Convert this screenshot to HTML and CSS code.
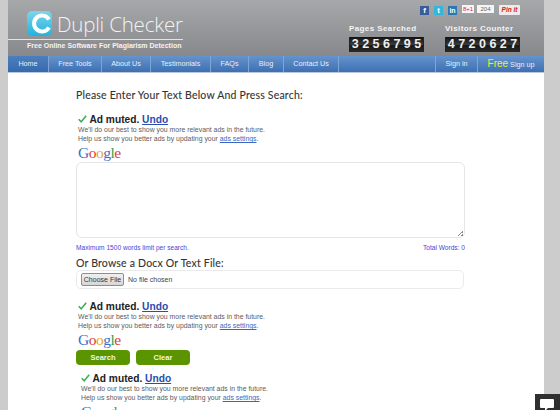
FILE: index.html
```html
<!DOCTYPE html>
<html lang="en">
<head>
  <meta charset="UTF-8">
  <title>Dupli Checker</title>
  <link rel="stylesheet" href="styles.css">
</head>
<body>
  <div id="page">
    <div class="header">
      <div class="brand">
        <div class="logo">
          <svg class="logo-icon" width="25" height="25" viewBox="0 0 25 25">
            <defs>
              <linearGradient id="logoFill" x1="0" y1="0" x2="0" y2="1">
                <stop offset="0" stop-color="#7fd4ea"/>
                <stop offset="1" stop-color="#1fb4dc"/>
              </linearGradient>
            </defs>
            <rect width="25" height="25" rx="5" fill="url(#logoFill)"/>
            <path d="M22 8.5a8 8 0 1 0 0 8" fill="none" stroke="#fff" stroke-width="4"/>
          </svg>
          <span class="logo-text">Dupli Checker</span>
        </div>
        <div class="tagline">Free Online Software For Plagiarism Detection</div>
      </div>
      <div class="header-right">
        <div class="social">
          <span class="soc soc-fb">f</span>
          <span class="soc soc-tw">t</span>
          <span class="soc soc-in">in</span>
          <span class="gplus">8+1</span>
          <span class="gcount">204</span>
          <span class="pin">Pin it</span>
        </div>
        <div class="counters">
          <div class="counter">
            <div class="counter-title">Pages Searched</div>
            <div class="digits"><span>3</span><span>2</span><span>5</span><span>6</span><span>7</span><span>9</span><span>5</span></div>
          </div>
          <div class="counter">
            <div class="counter-title">Visitors Counter</div>
            <div class="digits"><span>4</span><span>7</span><span>2</span><span>0</span><span>6</span><span>2</span><span>7</span></div>
          </div>
        </div>
      </div>
    </div>

    <div class="nav">
      <a class="nav-item active nav-home">Home</a>
      <a class="nav-item nav-tools">Free Tools</a>
      <a class="nav-item nav-about">About Us</a>
      <a class="nav-item nav-test">Testimonials</a>
      <a class="nav-item nav-faq">FAQs</a>
      <a class="nav-item nav-blog">Blog</a>
      <a class="nav-item nav-contact">Contact Us</a>
      <a class="nav-item nav-signin">Sign in</a>
      <a class="nav-item nav-signup"><b>Free</b> Sign up</a>
    </div>

    <div class="content">
      <h2 class="title">Please Enter Your Text Below And Press Search:</h2>

      <div class="ad">
        <div class="ad-head"><svg class="check" width="9" height="8" viewBox="0 0 9 8"><path d="M0.7 4.2l2.5 2.6 5-6" fill="none" stroke="#3fae5f" stroke-width="1.6"/></svg> Ad muted. <a>Undo</a></div>
        <p>We'll do our best to show you more relevant ads in the future.<br>Help us show you better ads by updating your <a>ads settings</a>.</p>
        <div class="google"><i class="g-b">G</i><i class="g-r">o</i><i class="g-y">o</i><i class="g-b">g</i><i class="g-g">l</i><i class="g-r">e</i></div>
      </div>

      <div class="textbox"><span class="grip"></span></div>
      <div class="limits">
        <span>Maximum 1500 words limit per search.</span>
        <span>Total Words: 0</span>
      </div>

      <h3 class="title browse">Or Browse a Docx Or Text File:</h3>
      <div class="filebox">
        <button class="choose">Choose File</button>
        <span>No file chosen</span>
      </div>

      <div class="ad ad-second">
        <div class="ad-head"><svg class="check" width="9" height="8" viewBox="0 0 9 8"><path d="M0.7 4.2l2.5 2.6 5-6" fill="none" stroke="#3fae5f" stroke-width="1.6"/></svg> Ad muted. <a>Undo</a></div>
        <p>We'll do our best to show you more relevant ads in the future.<br>Help us show you better ads by updating your <a>ads settings</a>.</p>
        <div class="google"><i class="g-b">G</i><i class="g-r">o</i><i class="g-y">o</i><i class="g-b">g</i><i class="g-g">l</i><i class="g-r">e</i></div>
      </div>

      <div class="actions">
        <button class="btn">Search</button>
        <button class="btn">Clear</button>
      </div>

      <div class="ad ad-third">
        <div class="ad-head"><svg class="check" width="9" height="8" viewBox="0 0 9 8"><path d="M0.7 4.2l2.5 2.6 5-6" fill="none" stroke="#3fae5f" stroke-width="1.6"/></svg> Ad muted. <a>Undo</a></div>
        <p>We'll do our best to show you more relevant ads in the future.<br>Help us show you better ads by updating your <a>ads settings</a>.</p>
        <div class="google"><i class="g-b">G</i><i class="g-r">o</i><i class="g-y">o</i><i class="g-b">g</i><i class="g-g">l</i><i class="g-r">e</i></div>
      </div>
    </div>
  </div>

  <div class="chat">
    <svg width="14" height="12" viewBox="0 0 14 12"><path d="M1 0h12a1 1 0 0 1 1 1v7a1 1 0 0 1-1 1H8l-3 3V9H1a1 1 0 0 1-1-1V1a1 1 0 0 1 1-1z" fill="#fff"/></svg>
  </div>
</body>
</html>
```

FILE: styles.css
```css
html, body {
  height: 410px;
  overflow: hidden;
}
body {
  margin: 0;
  background: #cccccc;
  font-family: "Liberation Sans", Arial, sans-serif;
}
#page {
  width: 536px;
  height: 410px;
  margin-left: 8px;
  background: #fff;
  overflow: hidden;
}

/* header */
.header {
  height: 56px;
  display: flex;
  justify-content: space-between;
  background: linear-gradient(#a7a8aa, #87888b);
}
.brand {
  width: 175px;
}
.logo {
  height: 39px;
  padding: 11px 0 0 19px;
  box-sizing: border-box;
  display: flex;
  gap: 5px;
}
.logo-icon {
  flex: none;
}
.logo-text {
  font-size: 20.5px;
  line-height: 26px;
  color: #f2f3f3;
  font-family: "Open Sans", sans-serif;
  font-weight: 300;
  white-space: nowrap;
  letter-spacing: -0.2px;
}
.tagline {
  border-top: 1px solid #e4e4e4;
  padding-left: 19px;
  font-size: 7px;
  line-height: 12px;
  font-weight: bold;
  color: #f4f4f4;
  white-space: nowrap;
}
.header-right {
  width: 171px;
  margin-right: 24px;
}
.social {
  height: 22px;
  padding-top: 5px;
  box-sizing: border-box;
  display: flex;
  align-items: flex-start;
  justify-content: flex-end;
}
.soc {
  width: 9px;
  height: 9px;
  margin: 1px 0 0 5px;
  font-size: 8px;
  line-height: 9px;
  font-weight: bold;
  text-align: center;
  color: #fff;
}
.soc-fb { background: #3b5c9a; }
.soc-tw { background: #35b5d9; }
.soc-in { background: #2a77b3; font-size: 7px; }
.gplus {
  margin-left: 5px;
  width: 12px;
  height: 8px;
  background: #f5f5f5;
  font-size: 6px;
  line-height: 8px;
  color: #d23;
  text-align: center;
}
.gcount {
  margin-left: 3px;
  width: 17px;
  height: 8px;
  background: #f5f5f5;
  font-size: 6px;
  line-height: 8px;
  color: #666;
  text-align: center;
}
.pin {
  margin-left: 5px;
  width: 21px;
  height: 10px;
  background: #f1eaea;
  border-radius: 1px;
  font-size: 6.5px;
  line-height: 10px;
  font-weight: bold;
  font-style: italic;
  color: #c22;
  text-align: center;
}
.counters {
  display: flex;
  justify-content: space-between;
}
.counter {
  width: 75px;
}
.counter-title {
  font-size: 8px;
  line-height: 13px;
  font-weight: bold;
  color: #f4f4f4;
  white-space: nowrap;
  letter-spacing: 0.4px;
}
.digits {
  margin-top: 2px;
  display: flex;
  height: 15px;
  padding: 0 1px;
  background: #222;
}
.digits span {
  flex: 1;
  font-size: 12.5px;
  line-height: 15px;
  font-weight: bold;
  text-align: center;
  color: #eee;
  background: linear-gradient(#111, #3a3a3a 50%, #161616 52%, #2a2a2a);
}

/* nav */
.nav {
  height: 16px;
  display: flex;
  background: linear-gradient(#6493cd, #3e70b2);
  border-bottom: 1px solid #bcc9dc;
  margin-bottom: -1px;
}
.nav-item {
  box-sizing: border-box;
  border-right: 1px solid #7fa5d6;
  font-size: 7.2px;
  line-height: 16px;
  color: #e8eef6;
  text-align: center;
  white-space: nowrap;
}
.active {
  background: linear-gradient(#4d7fbe, #356aad);
}
.nav-home { width: 41px; }
.nav-tools { width: 53px; }
.nav-about { width: 49px; }
.nav-test { width: 60px; }
.nav-faq { width: 38px; }
.nav-blog { width: 35px; }
.nav-contact { width: 55px; }
.nav-signin {
  width: 43px;
  margin-left: 96px;
  border-left: 1px solid #7fa5d6;
}
.nav-signup {
  flex: 1;
  border-right: none;
}
.nav-signup b {
  font-size: 10px;
  font-weight: normal;
  color: #f2ee30;
}

/* main content */
.content {
  padding: 16px 0 0 68px;
}
.title {
  margin: 0;
  font-family: Lato, "Liberation Sans", sans-serif;
  font-size: 10.5px;
  line-height: 15px;
  font-weight: normal;
  color: #333;
  letter-spacing: 0.2px;
  -webkit-text-stroke: 0.1px #333;
}
.ad {
  margin: 10px 0 0 2px;
}
.ad-head {
  font-size: 10.2px;
  line-height: 13px;
  font-weight: bold;
  color: #222;
}
.ad-head a {
  color: #2a4dae;
  text-decoration: underline;
}
.ad p {
  margin: -1px 0 0;
  font-size: 6.9px;
  line-height: 9px;
  color: #5b5b62;
}
.ad p a {
  color: #3b67c4;
  text-decoration: underline;
}
.google {
  height: 17px;
  margin-top: 1px;
  font-family: "Liberation Serif", serif;
  font-size: 15.5px;
  line-height: 17px;
  letter-spacing: -0.5px;
}
.google i {
  font-style: normal;
}
.g-b { color: #3b71c9; }
.g-r { color: #d8403a; }
.g-y { color: #e6a91f; }
.g-g { color: #3c9d4e; }
.textbox {
  position: relative;
  width: 389px;
  height: 76px;
  margin-top: 1px;
  box-sizing: border-box;
  border: 1px solid #e6e6e6;
  border-radius: 6px;
}
.grip {
  position: absolute;
  right: 1px;
  bottom: 1px;
  width: 5px;
  height: 5px;
  background: linear-gradient(135deg, transparent 45%, #888 45%, #888 60%, transparent 60%, transparent 75%, #888 75%);
}
.limits {
  width: 389px;
  margin-top: 5px;
  display: flex;
  justify-content: space-between;
  font-size: 6.6px;
  line-height: 9px;
  color: #4a45d8;
}
.browse {
  margin-top: 4px;
}
.filebox {
  width: 388px;
  height: 19px;
  margin-top: -1px;
  box-sizing: border-box;
  border: 1px solid #eaeaea;
  border-radius: 5px;
  padding: 3px 4px;
  display: flex;
  align-items: center;
  gap: 4px;
  font-size: 7px;
  color: #444;
}
.choose {
  width: 43px;
  height: 13px;
  padding: 0;
  border: 1px solid #8e8e8e;
  border-radius: 2px;
  background: linear-gradient(#f0f0f0, #d6d6d6);
  font-family: inherit;
  font-size: 7px;
  color: #333;
}
.ad-second {
  margin-top: 11px;
}
.actions {
  margin-top: 2px;
  display: flex;
  gap: 6px;
}
.btn {
  width: 54px;
  height: 15px;
  padding: 0;
  border: none;
  border-radius: 4px;
  background: #5a9500;
  font-family: inherit;
  font-size: 7.5px;
  font-weight: bold;
  color: #f2f6e6;
}
.ad-third {
  margin: 7px 0 0 5px;
}

/* chat tab over the corner */
.chat {
  position: absolute;
  left: 535px;
  top: 394px;
  width: 25px;
  height: 16px;
  background: #2f2f2f;
  padding: 3px 0 0 5px;
  box-sizing: border-box;
}
```
